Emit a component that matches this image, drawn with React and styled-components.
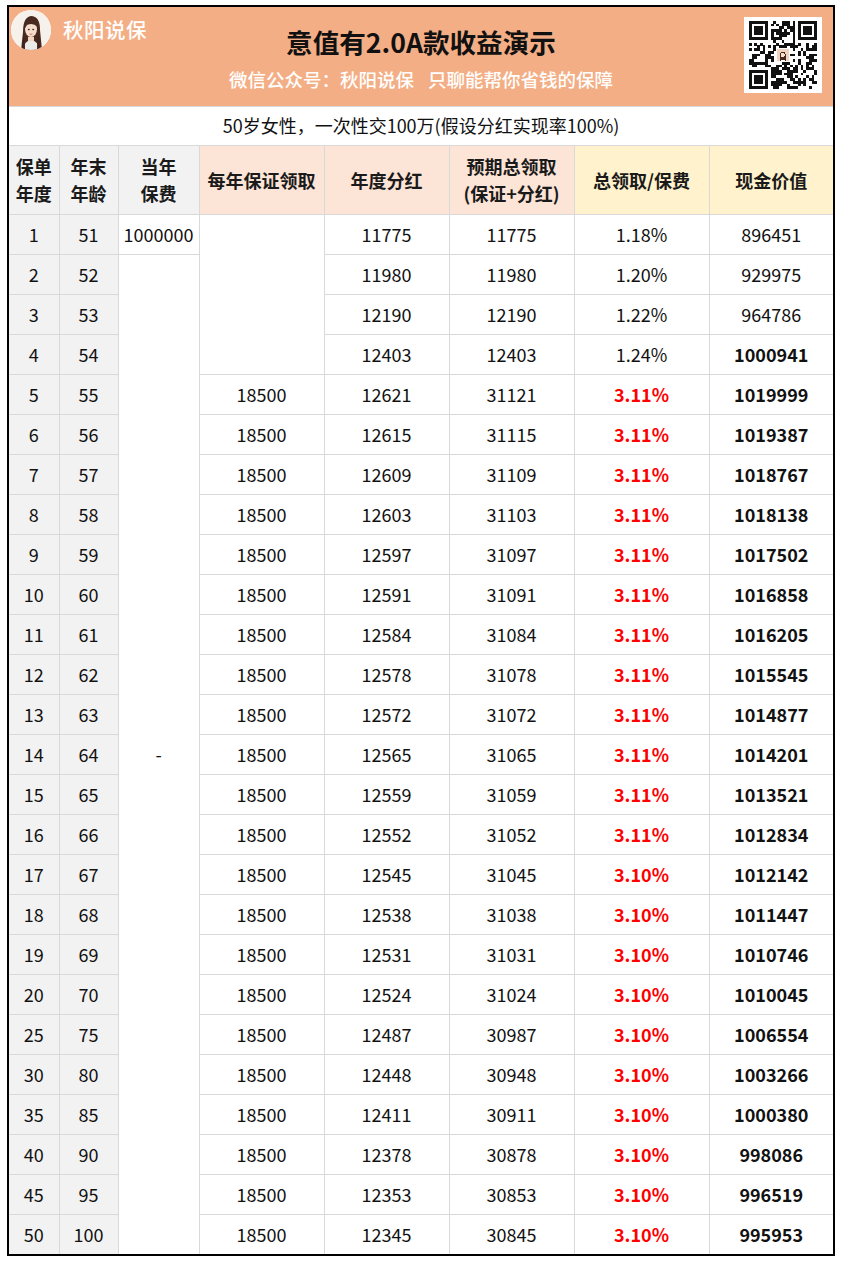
import React from "react";
import styled, { createGlobalStyle } from "styled-components";

const GlobalStyle = createGlobalStyle`
  html, body { margin: 0; padding: 0; background: #fff; }
  body { font-family: "Noto Sans CJK SC", "Noto Sans", sans-serif; color: #000; }
`;

const Frame = styled.div`
  margin: 5px 0 0 7px;
  width: 828px;
  border: 2px solid #000;
  box-sizing: border-box;
  background: #fff;
`;

const Banner = styled.div`
  height: 100px;
  background: #f4ae85;
  border-bottom: 1px solid #d9d9d9;
  display: grid;
  grid-template-columns: 1fr auto 1fr;
  box-sizing: border-box;
`;

const Brand = styled.div`
  display: flex;
  align-items: center;
  gap: 12px;
  align-self: start;
  padding: 3px 0 0 2px;
`;

const Avatar = styled.div`
  width: 40px;
  height: 40px;
  border-radius: 50%;
  overflow: hidden;
  background: #fff;
  flex: none;
  svg { display: block; }
`;

const BrandName = styled.div`
  color: #fff;
  font-size: 20.5px;
  font-weight: 500;
  letter-spacing: 0.5px;
  margin-top: -2px;
`;

const Titles = styled.div`
  display: flex;
  flex-direction: column;
  align-items: center;
  padding-top: 18px;
`;

const Title = styled.div`
  font-size: 26.6px;
  font-weight: 700;
  color: #111;
  line-height: 34px;
`;

const Slogan = styled.div`
  margin-top: 8px;
  font-size: 18.5px;
  font-weight: 500;
  color: #fff;
  line-height: 24px;
  display: flex;
  gap: 14px;
`;

const QrBox = styled.div`
  justify-self: end;
  align-self: start;
  margin: 10px 11px 0 0;
  width: 78px;
  height: 76px;
  background: #fff;
  display: flex;
  align-items: center;
  justify-content: center;
  svg { display: block; }
`;

const Caption = styled.div`
  height: 39px;
  display: flex;
  align-items: center;
  justify-content: center;
  font-size: 18px;
  color: #111;
  border-bottom: 1px solid #d9d9d9;
  box-sizing: border-box;
  padding-bottom: 2px;
`;

const Table = styled.table`
  width: 100%;
  border-collapse: collapse;
  border-style: hidden;
  table-layout: fixed;
`;

const headBg = { grey: "#f2f2f2", peach: "#fce4d6", cream: "#fff2cc" };

const Th = styled.th`
  height: 68px;
  padding: 0;
  border: 1px solid #d9d9d9;
  background: ${(p) => headBg[p.$tone]};
  font-size: 18px;
  font-weight: 700;
  color: #1a1a1a;
  line-height: 27px;
  text-align: center;
  vertical-align: middle;
`;

const Td = styled.td`
  height: 37px;
  padding: 0 0 2px;
  border: 1px solid #d9d9d9;
  background: ${(p) => (p.$shade ? "#f2f2f2" : "#fff")};
  font-size: 18px;
  font-weight: ${(p) => (p.$bold ? 700 : 400)};
  color: ${(p) => (p.$red ? "#ff0000" : "#111")};
  text-align: center;
  vertical-align: middle;
  white-space: nowrap;
`;

const rows = [
  [1, 51, null, 11775, 11775, "1.18%", 896451],
  [2, 52, null, 11980, 11980, "1.20%", 929975],
  [3, 53, null, 12190, 12190, "1.22%", 964786],
  [4, 54, null, 12403, 12403, "1.24%", 1000941],
  [5, 55, 18500, 12621, 31121, "3.11%", 1019999],
  [6, 56, 18500, 12615, 31115, "3.11%", 1019387],
  [7, 57, 18500, 12609, 31109, "3.11%", 1018767],
  [8, 58, 18500, 12603, 31103, "3.11%", 1018138],
  [9, 59, 18500, 12597, 31097, "3.11%", 1017502],
  [10, 60, 18500, 12591, 31091, "3.11%", 1016858],
  [11, 61, 18500, 12584, 31084, "3.11%", 1016205],
  [12, 62, 18500, 12578, 31078, "3.11%", 1015545],
  [13, 63, 18500, 12572, 31072, "3.11%", 1014877],
  [14, 64, 18500, 12565, 31065, "3.11%", 1014201],
  [15, 65, 18500, 12559, 31059, "3.11%", 1013521],
  [16, 66, 18500, 12552, 31052, "3.11%", 1012834],
  [17, 67, 18500, 12545, 31045, "3.10%", 1012142],
  [18, 68, 18500, 12538, 31038, "3.10%", 1011447],
  [19, 69, 18500, 12531, 31031, "3.10%", 1010746],
  [20, 70, 18500, 12524, 31024, "3.10%", 1010045],
  [25, 75, 18500, 12487, 30987, "3.10%", 1006554],
  [30, 80, 18500, 12448, 30948, "3.10%", 1003266],
  [35, 85, 18500, 12411, 30911, "3.10%", 1000380],
  [40, 90, 18500, 12378, 30878, "3.10%", 998086],
  [45, 95, 18500, 12353, 30853, "3.10%", 996519],
  [50, 100, 18500, 12345, 30845, "3.10%", 995953],
];

const colWidths = [50, 59, 81, 125, 125, 125, 135, 124];

function AvatarArt({ size = 40 }) {
  return (
    <svg width={size} height={size} viewBox="0 0 40 40">
      <rect width="40" height="40" fill="#f7f1ec" />
      <path d="M10 40 L12 22 Q12 7 20 6 Q29 6 29 20 L31 40 Z" fill="#4a2a20" />
      <path d="M12 40 Q13 31 20 30 Q27 31 29 40 Z" fill="#eceae8" />
      <path d="M17 27 L17 31 L23 31 L23 27 Z" fill="#f2d4c2" />
      <ellipse cx="20" cy="19" rx="6" ry="8" fill="#f5dccb" />
      <path d="M13.5 19 Q14 9 21 9.5 Q26 10 26.5 17 Q22 12 16 15 Z" fill="#4a2a20" />
      <ellipse cx="17.8" cy="19.5" rx="1" ry="0.7" fill="#3a2a25" />
      <ellipse cx="22.2" cy="19.5" rx="1" ry="0.7" fill="#3a2a25" />
      <path d="M18.6 24 Q20 24.8 21.4 24" stroke="#c96b6b" strokeWidth="0.9" fill="none" />
      <path d="M11 40 L12.5 24 Q14 30 14 40 Z" fill="#3d231a" />
      <path d="M29 40 L27.5 24 Q26 30 26 40 Z" fill="#3d231a" />
    </svg>
  );
}

function makeQr() {
  const n = 25;
  let seed = 20240611;
  const rnd = () => {
    seed = (seed * 1103515245 + 12345) & 0x7fffffff;
    return seed / 0x7fffffff;
  };
  const m = [];
  for (let y = 0; y < n; y++) {
    const r = [];
    for (let x = 0; x < n; x++) r.push(rnd() < 0.5);
    m.push(r);
  }
  const finder = (ox, oy) => {
    for (let y = -1; y < 8; y++)
      for (let x = -1; x < 8; x++) {
        const X = ox + x, Y = oy + y;
        if (X < 0 || Y < 0 || X >= n || Y >= n) continue;
        const edge = x === 0 || x === 6 || y === 0 || y === 6;
        const core = x >= 2 && x <= 4 && y >= 2 && y <= 4;
        const inside = x >= 0 && x <= 6 && y >= 0 && y <= 6;
        m[Y][X] = inside && (edge || core);
      }
  };
  finder(0, 0);
  finder(n - 7, 0);
  finder(0, n - 7);
  return m;
}
const qr = makeQr();

function QrArt() {
  const cells = [];
  qr.forEach((r, y) =>
    r.forEach((on, x) => {
      if (on && !(x >= 10 && x <= 14 && y >= 10 && y <= 14))
        cells.push(<rect key={`${x}-${y}`} x={x} y={y} width="1.02" height="1.02" fill="#111" />);
    })
  );
  return (
    <svg width="68" height="68" viewBox="0 0 25 25" shapeRendering="crispEdges">
      {cells}
      <rect x="10.2" y="10.2" width="4.6" height="4.6" fill="#f1d3c0" />
      <path d="M11.2 14.8 L11.6 11.8 Q12.5 10.6 13.4 11.8 L13.8 14.8 Z" fill="#4a2a20" />
      <ellipse cx="12.5" cy="12.5" rx="0.7" ry="0.9" fill="#f7e0d2" />
      <path d="M11.4 14.8 Q12.5 13.8 13.6 14.8 Z" fill="#fff" />
    </svg>
  );
}

export default function App() {
  return (
    <>
      <GlobalStyle />
      <Frame>
        <Banner>
          <Brand>
            <Avatar>
              <AvatarArt />
            </Avatar>
            <BrandName>秋阳说保</BrandName>
          </Brand>
          <Titles>
            <Title>意值有2.0A款收益演示</Title>
            <Slogan>
              <span>微信公众号：秋阳说保</span>
              <span>只聊能帮你省钱的保障</span>
            </Slogan>
          </Titles>
          <QrBox>
            <QrArt />
          </QrBox>
        </Banner>
        <Caption>50岁女性，一次性交100万(假设分红实现率100%)</Caption>
        <Table>
          <colgroup>
            {colWidths.map((w, i) => (
              <col key={i} style={{ width: w }} />
            ))}
          </colgroup>
          <thead>
            <tr>
              <Th $tone="grey">保单<br />年度</Th>
              <Th $tone="grey">年末<br />年龄</Th>
              <Th $tone="grey">当年<br />保费</Th>
              <Th $tone="peach">每年保证领取</Th>
              <Th $tone="peach">年度分红</Th>
              <Th $tone="peach">预期总领取<br />(保证+分红)</Th>
              <Th $tone="cream">总领取/保费</Th>
              <Th $tone="cream">现金价值</Th>
            </tr>
          </thead>
          <tbody>
            {rows.map((r, i) => (
              <tr key={r[0]}>
                <Td $shade>{r[0]}</Td>
                <Td $shade>{r[1]}</Td>
                {i === 0 && <Td>1000000</Td>}
                {i === 1 && <Td rowSpan={rows.length - 1}>-</Td>}
                {i === 0 && <Td rowSpan={4} />}
                {i >= 4 && <Td>{r[2]}</Td>}
                <Td>{r[3]}</Td>
                <Td>{r[4]}</Td>
                <Td $red={i >= 4} $bold={i >= 4}>{r[5]}</Td>
                <Td $bold={i >= 3}>{r[6]}</Td>
              </tr>
            ))}
          </tbody>
        </Table>
      </Frame>
    </>
  );
}
